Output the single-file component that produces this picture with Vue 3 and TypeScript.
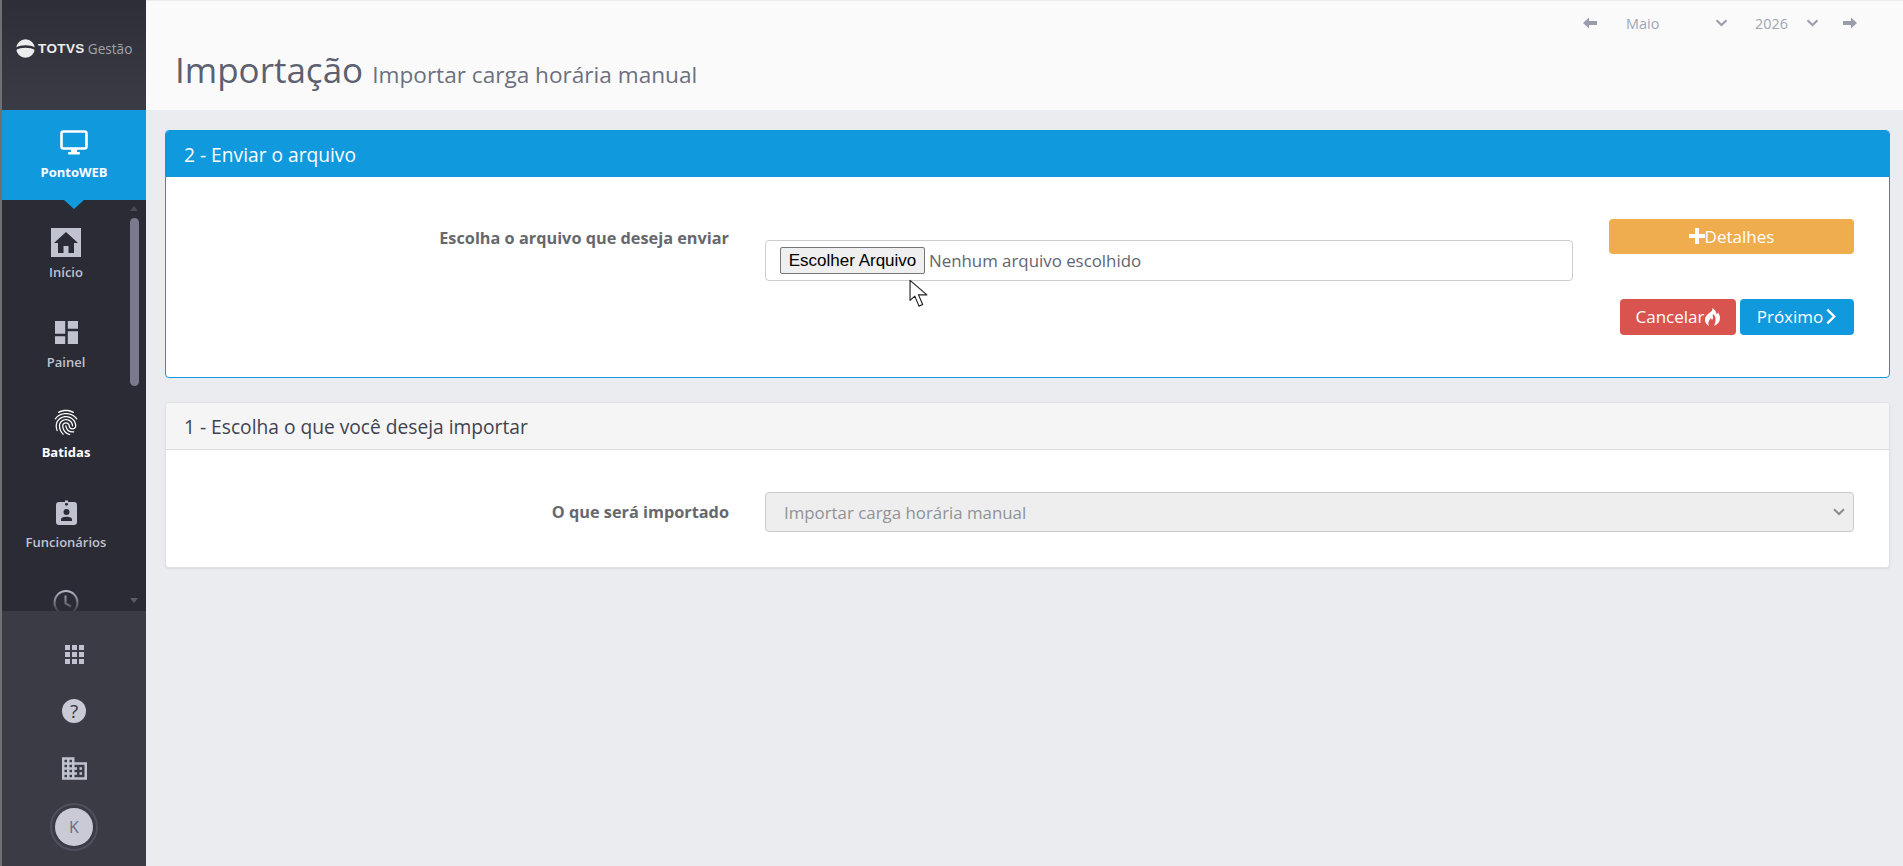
<script setup lang="ts">
const months = ['Maio']
const fingerprint = 'M17.81 4.47c-.08 0-.16-.02-.23-.06C15.66 3.42 14 3 12.01 3c-1.98 0-3.86.47-5.58 1.41-.24.13-.54.04-.68-.2-.13-.24-.04-.55.2-.68C7.82 2.52 9.86 2 12.01 2c2.13 0 3.99.47 6.03 1.52.25.13.34.43.21.67-.09.18-.26.28-.44.28zM3.5 9.72c-.1 0-.2-.03-.29-.09-.23-.16-.28-.47-.12-.7.99-1.4 2.25-2.5 3.75-3.27C9.98 4.04 14 4.03 17.15 5.65c1.5.77 2.76 1.86 3.75 3.25.16.22.11.54-.12.7-.23.16-.54.11-.7-.12-.9-1.26-2.04-2.25-3.39-2.94-2.87-1.47-6.54-1.47-9.4.01-1.36.7-2.5 1.7-3.4 2.96-.08.14-.23.21-.39.21zm6.25 12.07c-.13 0-.26-.05-.35-.15-.87-.87-1.34-1.43-2.01-2.64-.69-1.23-1.05-2.73-1.05-4.34 0-2.97 2.54-5.39 5.66-5.39s5.66 2.42 5.66 5.39c0 .28-.22.5-.5.5s-.5-.22-.5-.5c0-2.42-2.09-4.39-4.66-4.39-2.57 0-4.66 1.97-4.66 4.39 0 1.44.32 2.77.93 3.85.64 1.15 1.08 1.64 1.85 2.42.19.2.19.51 0 .71-.11.1-.24.15-.37.15zm7.17-1.85c-1.19 0-2.24-.3-3.1-.89-1.49-1.01-2.38-2.65-2.38-4.39 0-.28.22-.5.5-.5s.5.22.5.5c0 1.41.72 2.74 1.94 3.56.71.48 1.54.71 2.54.71.24 0 .64-.03 1.04-.1.27-.05.53.13.58.41.05.27-.13.53-.41.58-.57.11-1.07.12-1.21.12zM14.91 22c-.04 0-.09-.01-.13-.02-1.59-.44-2.63-1.03-3.72-2.1-1.4-1.39-2.17-3.24-2.17-5.22 0-1.62 1.38-2.94 3.08-2.94 1.7 0 3.08 1.32 3.08 2.94 0 1.07.93 1.94 2.08 1.94s2.08-.87 2.08-1.94c0-3.77-3.25-6.83-7.25-6.83-2.84 0-5.44 1.58-6.61 4.03-.39.81-.59 1.76-.59 2.8 0 .78.07 2.01.67 3.61.1.26-.03.55-.29.64-.26.1-.55-.04-.64-.29-.49-1.31-.73-2.61-.73-3.96 0-1.2.23-2.29.68-3.24 1.33-2.79 4.28-4.6 7.51-4.6 4.55 0 8.25 3.51 8.25 7.83 0 1.62-1.38 2.94-3.08 2.94s-3.08-1.32-3.08-2.94c0-1.07-.93-1.94-2.08-1.94s-2.08.87-2.08 1.94c0 1.71.66 3.31 1.87 4.51.95.94 1.86 1.46 3.27 1.85.27.07.42.35.35.61-.05.23-.26.38-.47.38z'
const domain = 'M12 7V3H2v18h20V7H12zM6 19H4v-2h2v2zm0-4H4v-2h2v2zm0-4H4V9h2v2zm0-4H4V5h2v2zm4 12H8v-2h2v2zm0-4H8v-2h2v2zm0-4H8V9h2v2zm0-4H8V5h2v2zm10 12h-8v-2h2v-2h-2v-2h2v-2h-2V9h8v10zm-2-8h-2v2h2v-2zm0 4h-2v2h2v-2z'
const appSquares = [0, 1, 2, 3, 4, 5, 6, 7, 8]
</script>

<template>
  <div class="app">
    <aside class="sidebar">
      <div class="logo">
        <svg class="logo-mark" viewBox="0 0 20 20" width="19" height="19">
          <circle cx="10" cy="10" r="9.8" fill="#eceded" />
          <path d="M0 9C5 5.6 15 5.6 20 9V11.5C15 8.6 5 8.6 0 11.5Z" fill="#2f3039" />
        </svg>
        <span class="logo-totvs">TOTVS</span>
        <span class="logo-gestao">Gestão</span>
      </div>

      <div class="product">
        <svg viewBox="0 0 28 25" width="28" height="25">
          <rect x="1.5" y="1.5" width="25" height="17" rx="2" fill="none" stroke="#fff" stroke-width="2.6" />
          <rect x="11" y="19" width="6" height="3" fill="#fff" />
          <rect x="8" y="22" width="12" height="2.4" rx="1" fill="#fff" />
        </svg>
        <span>PontoWEB</span>
      </div>

      <nav class="nav">
        <a class="nav-item">
          <svg viewBox="0 0 30 29" width="30" height="29">
            <rect width="30" height="29" fill="#c0c2d0" />
            <path d="M15 4 27 15H23V25H17.5V18H12.5V25H7V15H3Z" fill="#2a2b34" />
          </svg>
          <span>Início</span>
        </a>
        <a class="nav-item">
          <svg viewBox="3 3 18 18" width="23" height="23">
            <path d="M3 13h8V3H3v10zm0 8h8v-6H3v6zm10 0h8V11h-8v10zm0-18v6h8V3h-8z" fill="#c0c2d0" />
          </svg>
          <span>Painel</span>
        </a>
        <a class="nav-item is-lit">
          <svg viewBox="2.5 1.8 19 20.4" width="24" height="26">
            <path :d="fingerprint" fill="#fff" />
          </svg>
          <span>Batidas</span>
        </a>
        <a class="nav-item">
          <svg viewBox="0 0 21 25" width="21" height="25">
            <path d="M3 2H9V0.5H12V2H18Q21 2 21 5V22Q21 25 18 25H3Q0 25 0 22V5Q0 2 3 2Z" fill="#c0c2d0" />
            <rect x="9" y="3" width="3" height="2.4" rx="1" fill="#2a2b34" />
            <circle cx="10.5" cy="12" r="3" fill="#2a2b34" />
            <path d="M5 21V19.5Q5 16.8 10.5 16.8T16 19.5V21Z" fill="#2a2b34" />
          </svg>
          <span>Funcionários</span>
        </a>
        <a class="nav-item">
          <svg viewBox="0 0 26 26" width="26" height="26">
            <circle cx="13" cy="13" r="11.5" fill="none" stroke="#c0c2d0" stroke-width="2" />
            <path d="M12.5 6V14L18 17" fill="none" stroke="#c0c2d0" stroke-width="2" />
          </svg>
        </a>
        <div class="nav-fade"></div>
        <div class="scroll-up"></div>
        <div class="scroll-thumb"></div>
        <div class="scroll-down"></div>
      </nav>

      <div class="tools">
        <div class="apps">
          <i v-for="n in appSquares" :key="n"></i>
        </div>
        <div class="help">?</div>
        <svg class="domain" viewBox="2 3 20 18" width="25" height="23">
          <path :d="domain" fill="#c0c2d0" fill-rule="evenodd" />
        </svg>
        <div class="avatar"><span>K</span></div>
      </div>
    </aside>

    <main class="main">
      <header class="page-header">
        <div class="period">
          <svg class="arrow" viewBox="0 0 14 12" width="14" height="12"><path d="M0 6 6 0.5V4H14V8H6V11.5Z" /></svg>
          <span class="month" v-for="m in months" :key="m">{{ m }}</span>
          <svg class="chev" viewBox="0 0 12 8" width="13" height="8"><path d="M1 1.2 6 6 11 1.2" /></svg>
          <span class="year">2026</span>
          <svg class="chev" viewBox="0 0 12 8" width="13" height="8"><path d="M1 1.2 6 6 11 1.2" /></svg>
          <svg class="arrow" viewBox="0 0 14 12" width="14" height="12"><path d="M14 6 8 0.5V4H0V8H8V11.5Z" /></svg>
        </div>
        <h1 class="title">Importação <small>Importar carga horária manual</small></h1>
      </header>

      <section class="content">
        <div class="panel panel-primary">
          <div class="panel-heading">2 - Enviar o arquivo</div>
          <div class="panel-body upload-row">
            <label class="field-label upload-label">Escolha o arquivo que deseja enviar</label>
            <div class="file-box">
              <button class="file-button" type="button">Escolher Arquivo</button>
              <span class="file-name">Nenhum arquivo escolhido</span>
              <svg class="cursor" viewBox="0 0 19 27" width="20" height="29">
                <path d="M1 1V20L5.5 16L9.5 25.5L13 24L9 14.8H17Z" fill="#fff" stroke="#222" stroke-width="1.1" stroke-linejoin="round" />
              </svg>
            </div>
            <div class="actions">
              <button class="btn btn-warning btn-wide" type="button">
                <svg viewBox="0 0 16 16" width="16" height="16"><path d="M6 0H10V6H16V10H10V16H6V10H0V6H6Z" fill="#fff" /></svg>Detalhes
              </button>
              <div class="actions-row">
                <button class="btn btn-danger" type="button">
                  Cancelar<svg viewBox="0 0 16 18" width="16" height="18">
                    <path fill-rule="evenodd" d="M8 0C9.5 3 6 4 3 7C0 10 0 15 5 18C3.5 15 4.5 12.5 7 10C7.2 12 9 12 9 10C9 8.5 8.5 7.5 9 6C11 7.5 12 10 11.5 13C11.2 15 10.5 17 10 18C14 16.5 16 13.5 16 10C16 7.5 15 6 14 4.5C13.6 5.5 13 6 12.5 6C12.5 3.5 10.5 1 8 0Z" fill="#fff" />
                  </svg>
                </button>
                <button class="btn btn-primary" type="button">
                  Próximo<svg viewBox="0 0 11 16" width="12" height="17"><path d="M2 1.5 8.5 8 2 14.5" fill="none" stroke="#fff" stroke-width="2.2" /></svg>
                </button>
              </div>
            </div>
          </div>
        </div>

        <div class="panel panel-default">
          <div class="panel-heading">1 - Escolha o que você deseja importar</div>
          <div class="panel-body import-row">
            <label class="field-label">O que será importado</label>
            <div class="select-box">
              <span>Importar carga horária manual</span>
              <svg viewBox="0 0 12 8" width="12" height="8"><path d="M1 1.2 6 6 11 1.2" /></svg>
            </div>
          </div>
        </div>
      </section>
    </main>
  </div>
</template>

<style scoped>
.app {
  display: flex;
  height: 866px;
  overflow: hidden;
  background: #ebecf0;
  font-family: "Open Sans", "Noto Sans", sans-serif;
}

.sidebar {
  width: 146px;
  flex: none;
  display: flex;
  flex-direction: column;
  border-left: 2px solid #6f7074;
  box-sizing: border-box;
  background: #2a2b34;
}

.logo {
  height: 110px;
  flex: none;
  box-sizing: border-box;
  display: flex;
  align-items: center;
  padding: 0 0 13px 14px;
  background: linear-gradient(#2d2e37, #3a3b45);
}
.logo-mark {
  margin-right: 3px;
}
.logo-totvs {
  font-family: "Liberation Sans", sans-serif;
  font-weight: 700;
  font-size: 13.5px;
  color: #eceded;
  letter-spacing: 0.4px;
}
.logo-gestao {
  font-size: 13.6px;
  color: #a2a3a9;
  margin-left: 3px;
}

.product {
  height: 90px;
  flex: none;
  position: relative;
  box-sizing: border-box;
  padding-top: 20px;
  background: #1199de;
  display: flex;
  flex-direction: column;
  align-items: center;
  gap: 8px;
  color: #fff;
  font-size: 13px;
  font-weight: 700;
}
.product::after {
  content: "";
  position: absolute;
  left: 62px;
  bottom: -9px;
  border-left: 10px solid transparent;
  border-right: 10px solid transparent;
  border-top: 9px solid #1199de;
}

.nav {
  flex: 1;
  position: relative;
  overflow: hidden;
  padding-top: 28px;
  box-sizing: border-box;
}
.nav-item {
  height: 90px;
  width: 128px;
  display: flex;
  flex-direction: column;
  align-items: center;
  gap: 6px;
  color: #c0c2d0;
  font-size: 13px;
  font-weight: 600;
}
.nav-item svg {
  height: 29px;
  flex: none;
}
.nav-item.is-lit {
  color: #fff;
  font-weight: 700;
}
.nav-fade {
  position: absolute;
  left: 0;
  right: 0;
  bottom: 0;
  height: 22px;
  background: linear-gradient(rgba(42, 43, 52, 0), rgba(42, 43, 52, 0.85));
}
.scroll-up,
.scroll-down {
  position: absolute;
  left: 128px;
  width: 0;
  border-left: 4px solid transparent;
  border-right: 4px solid transparent;
}
.scroll-up {
  top: 6px;
  border-bottom: 5px solid #4a4b55;
}
.scroll-down {
  bottom: 8px;
  border-top: 5px solid #5a5b66;
}
.scroll-thumb {
  position: absolute;
  left: 128px;
  top: 18px;
  width: 9px;
  height: 168px;
  border-radius: 5px;
  background: #7a7a8c;
}

.tools {
  height: 255px;
  flex: none;
  box-sizing: border-box;
  background: #3a3b45;
  display: flex;
  flex-direction: column;
  align-items: center;
  padding-top: 34px;
}
.apps {
  display: grid;
  grid-template-columns: repeat(3, 5px);
  grid-auto-rows: 5px;
  gap: 2px;
  margin-bottom: 35px;
}
.apps i {
  display: block;
  background: #c0c2d0;
}
.help {
  width: 24px;
  height: 24px;
  border-radius: 50%;
  background: #c9cad6;
  color: #34353f;
  font-size: 19px;
  font-weight: 400;
  line-height: 24px;
  text-align: center;
  margin-bottom: 34px;
}
.domain {
  flex: none;
  margin-bottom: 23px;
}
.avatar {
  width: 48px;
  height: 48px;
  box-sizing: border-box;
  border-radius: 50%;
  border: 2px solid #4f505c;
  padding: 3px;
  flex: none;
}
.avatar span {
  display: block;
  height: 38px;
  border-radius: 50%;
  background: #c9cad6;
  color: #666a85;
  font-size: 16px;
  line-height: 38px;
  text-align: center;
}

.main {
  flex: 1;
  min-width: 0;
}

.page-header {
  height: 110px;
  box-sizing: border-box;
  background: #fafafa;
  border-top: 1px solid #ededed;
  padding-right: 46px;
}
.period {
  height: 44px;
  display: flex;
  align-items: center;
  justify-content: flex-end;
  color: #a0a6b6;
  font-size: 14.4px;
}
.arrow {
  fill: #9a9dac;
}
.chev {
  fill: none;
  stroke: #9a9dac;
  stroke-width: 2;
}
.month {
  width: 89px;
  margin-left: 29px;
}
.year {
  margin-left: 27px;
  margin-right: 18px;
}
.period .chev + .arrow {
  margin-left: 24px;
}
.title {
  margin: 3px 0 0 29px;
  font-size: 35px;
  line-height: 44px;
  font-weight: 400;
  color: #5c6070;
  letter-spacing: 0;
}
.title small {
  font-size: 22.6px;
  color: #6c7080;
}

.content {
  padding: 20px 13px 0 19px;
}

.panel {
  background: #fff;
  border-radius: 4px;
  box-sizing: border-box;
  overflow: hidden;
}
.panel-heading {
  padding: 0 18px;
  font-size: 19.2px;
  display: flex;
  align-items: center;
}
.panel-primary {
  height: 248px;
  border: 1px solid #1199de;
  margin-bottom: 24px;
}
.panel-primary .panel-heading {
  height: 46px;
  background: #1199de;
  color: #fff;
}
.panel-default {
  height: 166px;
  border: 1px solid #e0e1e4;
  box-shadow: 0 1px 2px rgba(0, 0, 0, 0.08);
}
.panel-default .panel-heading {
  height: 46px;
  background: #f5f5f5;
  color: #3f4350;
  border-bottom: 1px solid #dddde0;
}

.panel-body {
  display: grid;
  padding-top: 42px;
}
.upload-row {
  grid-template-columns: 563px 808px 245px;
  column-gap: 36px;
  align-items: start;
}
.import-row {
  grid-template-columns: 563px 1089px;
  column-gap: 36px;
  align-items: center;
}
.field-label {
  text-align: right;
  font-size: 16.3px;
  font-weight: 700;
  color: #66686e;
}
.upload-label {
  margin-top: 8px;
}

.file-box {
  position: relative;
  margin-top: 21px;
  height: 41px;
  box-sizing: border-box;
  border: 1px solid #ccc;
  border-radius: 4px;
  display: flex;
  align-items: center;
  padding-left: 14px;
}
.file-button {
  width: 145px;
  height: 27px;
  padding: 0;
  box-sizing: border-box;
  border: 1px solid #767676;
  border-radius: 2px;
  background: #efefef;
  color: #000;
  font-family: "Liberation Sans", Arial, sans-serif;
  font-size: 17px;
}
.file-name {
  margin-left: 4px;
  font-size: 16.85px;
  color: #5f6570;
}
.cursor {
  position: absolute;
  left: 143px;
  top: 38px;
}

.actions {
  display: flex;
  flex-direction: column;
  gap: 45px;
}
.actions-row {
  display: flex;
  justify-content: flex-end;
  gap: 4px;
}
.btn {
  border: 0;
  border-radius: 4px;
  color: #fff;
  font-family: inherit;
  font-size: 17px;
  display: inline-flex;
  align-items: center;
  justify-content: center;
  padding: 0 0 1px;
}
.btn-wide {
  height: 35px;
  width: 100%;
  background: #f0ad4e;
}
.btn-danger {
  width: 116px;
  height: 36px;
  background: #d9534f;
}
.btn-primary {
  width: 114px;
  height: 36px;
  background: #1199de;
  gap: 2px;
}

.select-box {
  height: 40px;
  box-sizing: border-box;
  border: 1px solid #ccc;
  border-radius: 4px;
  background: #eee;
  padding: 0 8px 0 18px;
  display: flex;
  align-items: center;
  justify-content: space-between;
  color: #8f9299;
  font-size: 16.85px;
}
.select-box svg {
  fill: none;
  stroke: #8a8c92;
  stroke-width: 2;
}
</style>

<style>
html,
body {
  margin: 0;
  background: #ebecf0;
}
</style>
